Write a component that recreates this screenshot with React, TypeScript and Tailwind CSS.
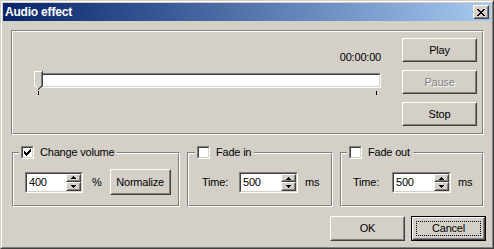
import React from "react";

const FACE = "#D4D0C8";

function Raised({ children, className = "" }: { children?: React.ReactNode; className?: string }) {
  return (
    <div className={`border border-t-white border-l-white border-r-[#404040] border-b-[#404040] bg-[#D4D0C8] ${className}`}>
      <div className="w-full h-full border border-t-[#D4D0C8] border-l-[#D4D0C8] border-r-[#808080] border-b-[#808080] flex items-center justify-center">
        {children}
      </div>
    </div>
  );
}

function Btn({ children, disabled = false, className = "" }: { children: React.ReactNode; disabled?: boolean; className?: string }) {
  return (
    <Raised className={className}>
      <span className={disabled ? "text-[#808080] [text-shadow:1px_1px_0_#ffffff]" : "text-black"}>{children}</span>
    </Raised>
  );
}

function DefaultBtn({ children, className = "" }: { children: React.ReactNode; className?: string }) {
  return (
    <div className={`border border-black ${className}`}>
      <div className="w-full h-full border border-t-white border-l-white border-r-[#404040] border-b-[#404040] bg-[#D4D0C8]">
        <div className="w-full h-full border border-t-[#D4D0C8] border-l-[#D4D0C8] border-r-[#808080] border-b-[#808080] p-[2px]">
          <div className="w-full h-full border border-dotted border-black flex items-center justify-center">
            <span className="text-black">{children}</span>
          </div>
        </div>
      </div>
    </div>
  );
}

function Etched({ children, className = "" }: { children?: React.ReactNode; className?: string }) {
  return (
    <div className={`border border-t-[#808080] border-l-[#808080] border-r-white border-b-white ${className}`}>
      <div className="w-full h-full border border-t-white border-l-white border-r-[#808080] border-b-[#808080]">
        {children}
      </div>
    </div>
  );
}

function Check() {
  return (
    <svg width="7" height="7" viewBox="0 0 7 7" shapeRendering="crispEdges">
      <path d="M0 2h1v3H0z M1 3h1v3H1z M2 4h1v3H2z M3 3h1v3H3z M4 2h1v3H4z M5 1h1v3H5z M6 0h1v3H6z" fill="#000" />
    </svg>
  );
}

function CheckBox({ checked }: { checked: boolean }) {
  return (
    <div className="w-[13px] h-[13px] border border-t-[#808080] border-l-[#808080] border-r-white border-b-white shrink-0">
      <div className="w-full h-full border border-t-[#404040] border-l-[#404040] border-r-[#D4D0C8] border-b-[#D4D0C8] bg-white flex items-center justify-center">
        {checked && <Check />}
      </div>
    </div>
  );
}

function ArrowUp() {
  return (
    <svg width="5" height="3" viewBox="0 0 5 3" shapeRendering="crispEdges">
      <path d="M2 0h1v1H2z M1 1h3v1H1z M0 2h5v1H0z" fill="#000" />
    </svg>
  );
}
function ArrowDown() {
  return (
    <svg width="5" height="3" viewBox="0 0 5 3" shapeRendering="crispEdges">
      <path d="M0 0h5v1H0z M1 1h3v1H1z M2 2h1v1H2z" fill="#000" />
    </svg>
  );
}

function Spin({ value, className = "" }: { value: string; className?: string }) {
  return (
    <div className={`h-[21px] border border-t-[#808080] border-l-[#808080] border-r-white border-b-white shrink-0 ${className}`}>
      <div className="w-full h-full border border-t-[#404040] border-l-[#404040] border-r-[#D4D0C8] border-b-[#D4D0C8] bg-white flex">
        <div className="flex-1 pl-[2px] leading-[17px] text-black">{value}</div>
        <div className="w-[15px] flex flex-col">
          <Raised className="w-[15px] h-[8px]">
            <ArrowUp />
          </Raised>
          <Raised className="w-[15px] h-[9px]">
            <ArrowDown />
          </Raised>
        </div>
      </div>
    </div>
  );
}

function Thumb() {
  return (
    <svg width="9" height="19" viewBox="0 0 9 19" shapeRendering="crispEdges">
      <path d="M0 0H9V14L4.5 19L0 14Z" fill={FACE} />
      <path d="M0 0h8v1H0z M0 1h1v14H0z M1 15h1v1H1z M2 16h1v1H2z M3 17h1v1H3z" fill="#fff" />
      <path d="M8 0h1v15H8z M7 15h1v1H7z M6 16h1v1H6z M5 17h1v1H5z M4 18h1v1H4z" fill="#404040" />
      <path d="M7 1h1v14H7z M6 15h1v1H6z M5 16h1v1H5z M4 17h1v1H4z" fill="#808080" />
    </svg>
  );
}

function CloseGlyph() {
  return (
    <svg width="8" height="7" viewBox="0 0 8 7" shapeRendering="crispEdges">
      <path d="M0 0h2v1H0z M6 0h2v1H6z M1 1h2v1H1z M5 1h2v1H5z M2 2h4v1H2z M3 3h2v1H3z M2 4h4v1H2z M1 5h2v1H1z M5 5h2v1H5z M0 6h2v1H0z M6 6h2v1H6z" fill="#000" />
    </svg>
  );
}

export default function App() {
  return (
    <div className="w-[494px] h-[249px] bg-[#D4D0C8] border border-t-[#D4D0C8] border-l-[#D4D0C8] border-r-[#404040] border-b-[#404040] font-['Liberation_Sans',Arial,sans-serif] text-[11px] tracking-[-0.2px] text-black select-none">
      <div className="w-full h-full border border-t-white border-l-white border-r-[#808080] border-b-[#808080] p-px flex flex-col">
        {/* Title bar */}
        <div className="h-[18px] shrink-0 bg-gradient-to-r from-[#0A246A] to-[#A6CAF0] flex items-center pl-[2px] pr-[2px]">
          <span className="flex-1 text-white font-bold text-[12px] leading-[14px]">Audio effect</span>
          <Raised className="w-[16px] h-[14px]">
            <CloseGlyph />
          </Raised>
        </div>

        {/* Client */}
        <div className="flex-1 flex flex-col pl-[8px] pt-[9px]">
          {/* Top group */}
          <Etched className="w-[473px] h-[105px]">
            <div className="flex h-full">
              <div className="flex-1 pl-[21px] pr-[21px] flex flex-col">
                <div className="text-right mt-[19px] leading-[13px]">00:00:00</div>
                <div className="relative mt-[7px] h-[19px]">
                  <div className="ml-[7px] mt-[2px] h-[15px] border border-t-[#808080] border-l-[#808080] border-r-white border-b-white">
                    <div className="w-full h-full border border-t-[#404040] border-l-[#404040] border-r-[#D4D0C8] border-b-[#D4D0C8] bg-white" />
                  </div>
                  <div className="absolute left-0 top-0 leading-none">
                    <Thumb />
                  </div>
                </div>
                <div className="flex justify-between px-[4px] mt-[1px]">
                  <div className="w-px h-[4px] bg-black" />
                  <div className="w-px h-[4px] bg-black" />
                </div>
              </div>
              <div className="w-[75px] mr-[5px] mt-[6px] flex flex-col gap-[8px]">
                <Btn className="w-[75px] h-[24px]">Play</Btn>
                <Btn className="w-[75px] h-[24px]" disabled>Pause</Btn>
                <Btn className="w-[75px] h-[24px]">Stop</Btn>
              </div>
            </div>
          </Etched>

          {/* Bottom groups */}
          <div className="flex gap-[7px] pl-[1px] mt-[17px]">
            {/* Change volume */}
            <div className="relative w-[168px] h-[55px]">
              <Etched className="w-full h-full">
                <div className="flex items-center pl-[11px] pt-[17px] h-full box-border">
                  <div className="flex items-center h-[22px] self-start">
                    <Spin value="400" className="w-[58px]" />
                    <span className="ml-[9px]">%</span>
                    <Btn className="ml-[8px] w-[61px] h-[26px]">Normalize</Btn>
                  </div>
                </div>
              </Etched>
              <div className="absolute -top-[6px] left-[7px] bg-[#D4D0C8] flex items-center pl-[2px] pr-[3px] h-[13px]">
                <CheckBox checked />
                <span className="ml-[6px] leading-[13px]">Change volume</span>
              </div>
            </div>

            {/* Fade in */}
            <div className="relative w-[146px] h-[55px]">
              <Etched className="w-full h-full">
                <div className="flex items-center pl-[13px] pt-[18px]">
                  <span className="w-[37px]">Time:</span>
                  <Spin value="500" className="w-[59px]" />
                  <span className="ml-[7px]">ms</span>
                </div>
              </Etched>
              <div className="absolute -top-[6px] left-[8px] bg-[#D4D0C8] flex items-center pl-[2px] pr-[3px] h-[13px]">
                <CheckBox checked={false} />
                <span className="ml-[6px] leading-[13px]">Fade in</span>
              </div>
            </div>

            {/* Fade out */}
            <div className="relative w-[144px] h-[55px]">
              <Etched className="w-full h-full">
                <div className="flex items-center pl-[11px] pt-[18px]">
                  <span className="w-[39px]">Time:</span>
                  <Spin value="500" className="w-[59px]" />
                  <span className="ml-[7px]">ms</span>
                </div>
              </Etched>
              <div className="absolute -top-[6px] left-[7px] bg-[#D4D0C8] flex items-center pl-[2px] pr-[3px] h-[13px]">
                <CheckBox checked={false} />
                <span className="ml-[6px] leading-[13px]">Fade out</span>
              </div>
            </div>
          </div>

          {/* OK / Cancel */}
          <div className="flex justify-end gap-[6px] pr-[5px] mt-[9px]">
            <Btn className="w-[75px] h-[25px]">OK</Btn>
            <DefaultBtn className="w-[75px] h-[25px]">Cancel</DefaultBtn>
          </div>
        </div>
      </div>
    </div>
  );
}
